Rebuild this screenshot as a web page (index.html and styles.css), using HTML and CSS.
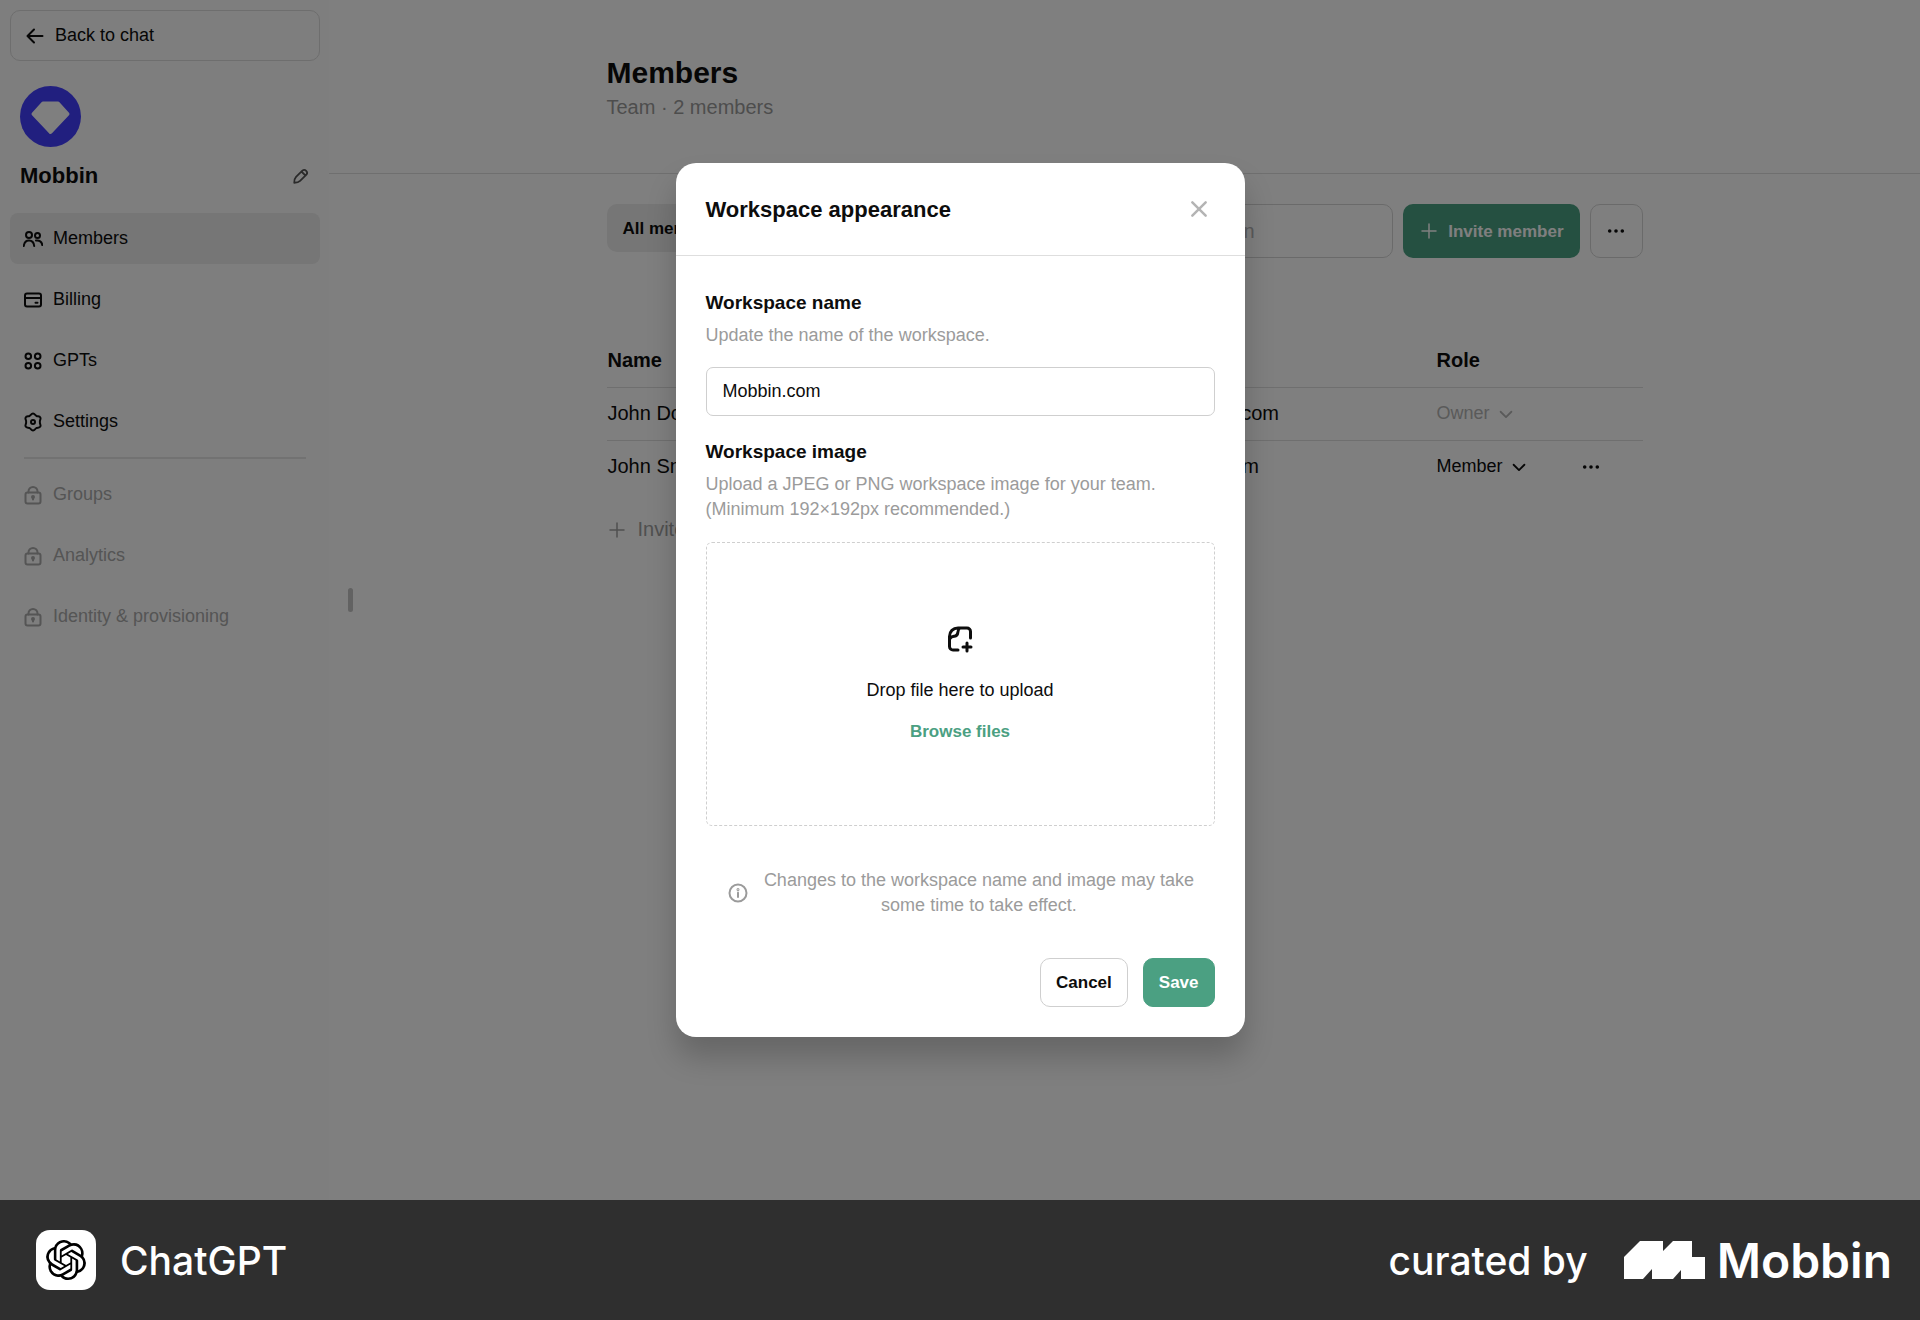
FILE: index.html
```html
<!DOCTYPE html>
<html lang="en">
<head>
    <meta charset="UTF-8">
    <meta name="viewport" content="width=device-width, initial-scale=1.0">
    <title>Members</title>
    <link rel="stylesheet" href="styles.css">
</head>
<body>
    <!-- Shared icons -->
    <svg class="sprite" aria-hidden="true">
        <symbol id="lock" viewBox="0 0 20 20">
            <rect x="2.500" y="7.500" width="15" height="11" rx="2"/>
            <path d="M5.500 7.500V6.500a4.500 4.500 0 0 1 9 0v1"/>
            <circle cx="10" cy="12" r="1" fill="currentColor"/>
            <path d="M10 12v2.500"/>
        </symbol>
        <symbol id="chevron" viewBox="0 0 20 20">
            <path d="M4 7.500 10 13.500l6-6"/>
        </symbol>
        <symbol id="dots" viewBox="0 0 20 20">
            <circle cx="3" cy="10" r="2"/>
            <circle cx="10" cy="10" r="2"/>
            <circle cx="17" cy="10" r="2"/>
        </symbol>
        <symbol id="plus" viewBox="0 0 20 20">
            <path d="M10 3v14M3 10h14"/>
        </symbol>
    </svg>

    <div class="app">
        <aside class="sidebar">
            <a class="back" href="#">
                <svg class="icon" viewBox="0 0 20 20"><path d="M17.500 10h-15M9 3.500 2.500 10 9 16.500"/></svg>
                Back to chat
            </a>
            <div class="workspace">
                <svg class="avatar" viewBox="0 0 61 61">
                    <circle cx="30.500" cy="30.500" r="30.500" fill="#433eff"/>
                    <path d="M23 17.500h15L47.500 28 30.500 46 13.500 28z" fill="#fff" stroke="#fff" stroke-width="4" stroke-linejoin="round"/>
                </svg>
                <div class="workspace-row">
                    <h2>Mobbin</h2>
                    <button class="edit" aria-label="Edit workspace">
                        <svg class="icon-sm" viewBox="0 0 20 20"><path d="M2.500 17.500c0-3.500.5-5 2-6.500l7-7a3.200 3.200 0 0 1 4.500 4.500l-7 7c-1.500 1.500-3 2-6.500 2zM10.500 5l4.500 4.500"/></svg>
                    </button>
                </div>
            </div>
            <nav class="menu">
                <a class="menu-item active" href="#">
                    <svg class="icon" viewBox="0 0 20 20"><circle cx="6" cy="6" r="3"/><circle cx="14.500" cy="6.500" r="2.500"/><path d="M.8 17c.4-3.500 2.500-5.500 5.200-5.500s4.800 2 5.200 5.500M13 11.600c3.300-.6 5.800 1.200 6.300 4.400"/></svg>
                    Members
                </a>
                <a class="menu-item" href="#">
                    <svg class="icon" viewBox="0 0 20 20"><rect x="2" y="3.500" width="16" height="13" rx="2"/><path d="M2 8h16M12.500 12.700h2"/></svg>
                    Billing
                </a>
                <a class="menu-item" href="#">
                    <svg class="icon" viewBox="0 0 20 20"><circle cx="5.300" cy="5.300" r="2.800"/><circle cx="14.700" cy="5.300" r="2.800"/><circle cx="5.300" cy="14.700" r="2.800"/><circle cx="14.700" cy="14.700" r="2.800"/></svg>
                    GPTs
                </a>
                <a class="menu-item" href="#">
                    <svg class="icon" viewBox="0 0 20 20"><path d="M13.450 4C15 4.600 16.600 3.900 17.400 5.600S16.400 8.400 16.900 10C16.400 11.600 18.200 12.700 17.400 14.400S15 15.400 13.450 16C12.200 16.700 11.700 18.400 10 18.400S7.800 16.700 6.550 16C5 15.400 3.400 16.100 2.600 14.400S3.600 11.600 3.100 10C3.600 8.400 1.800 7.300 2.600 5.600S5 4.600 6.550 4C7.800 3.300 8.300 1.600 10 1.600S12.200 3.300 13.450 4z"/><circle cx="10" cy="10" r="2"/></svg>
                    Settings
                </a>
                <hr>
                <a class="menu-item locked" href="#">
                    <svg class="icon"><use href="#lock"/></svg>
                    Groups
                </a>
                <a class="menu-item locked" href="#">
                    <svg class="icon"><use href="#lock"/></svg>
                    Analytics
                </a>
                <a class="menu-item locked" href="#">
                    <svg class="icon"><use href="#lock"/></svg>
                    Identity &amp; provisioning
                </a>
            </nav>
        </aside>

        <main class="main">
            <span class="drag-handle"></span>
            <header class="page-header">
                <div class="container">
                    <h1>Members</h1>
                    <p>Team · 2 members</p>
                </div>
            </header>
            <div class="container">
                <div class="toolbar">
                    <button class="tab">All members</button>
                    <input class="search" type="text" placeholder="Find a person" aria-label="Find a person">
                    <button class="invite">
                        <svg class="icon"><use href="#plus"/></svg>
                        Invite member
                    </button>
                    <button class="more" aria-label="More"><svg class="icon-sm dots"><use href="#dots"/></svg></button>
                </div>
                <table class="members">
                    <thead>
                        <tr><th class="col-name">Name</th><th class="col-email">Email</th><th class="col-role">Role</th><th></th></tr>
                    </thead>
                    <tbody>
                        <tr>
                            <td>John Doe</td>
                            <td>johndoe@mobbin.com</td>
                            <td>
                                <div class="role disabled">
                                    <select aria-label="Role of John Doe" disabled><option>Owner</option></select>
                                    <svg class="icon-sm"><use href="#chevron"/></svg>
                                </div>
                            </td>
                            <td></td>
                        </tr>
                        <tr>
                            <td>John Snow</td>
                            <td>jsnow@mobbin.com</td>
                            <td>
                                <div class="role">
                                    <select aria-label="Role of John Snow"><option>Member</option><option>Admin</option></select>
                                    <svg class="icon-sm"><use href="#chevron"/></svg>
                                </div>
                            </td>
                            <td><button class="row-more" aria-label="Member options"><svg class="icon-sm dots"><use href="#dots"/></svg></button></td>
                        </tr>
                    </tbody>
                </table>
                <button class="invite-row">
                    <svg class="icon"><use href="#plus"/></svg>
                    Invite member
                </button>
            </div>
        </main>

        <div class="overlay">
            <form class="modal" role="dialog" aria-labelledby="modal-title">
                <div class="modal-header">
                    <h2 id="modal-title">Workspace appearance</h2>
                    <button type="button" class="close" aria-label="Close">
                        <svg viewBox="0 0 24 24"><path d="M4 4l16 16M20 4 4 20"/></svg>
                    </button>
                </div>
                <div class="modal-body">
                    <label class="field-title" for="workspace-name">Workspace name</label>
                    <p class="hint">Update the name of the workspace.</p>
                    <input class="name-input" id="workspace-name" type="text" value="Mobbin.com">
                    <h3 class="field-title">Workspace image</h3>
                    <p class="hint">Upload a JPEG or PNG workspace image for your team. (Minimum 192×192px recommended.)</p>
                    <div class="dropzone">
                        <svg class="file-icon" viewBox="0 0 28 28"><path d="M12 25H7a3.500 3.500 0 0 1-3.500-3.500V11.500C3.500 6.500 7 3 12 3h9a3.500 3.500 0 0 1 3.500 3.500V13M4 13.500c1-2 2.500-2 4.500-2.300 2-.3 3-1.200 3.200-3.200.2-2 .3-3.500 2-5M21 18v8M17 22h8"/></svg>
                        <p>Drop file here to upload</p>
                        <button type="button" class="browse">Browse files</button>
                    </div>
                    <div class="notice">
                        <svg class="icon" viewBox="0 0 20 20"><circle cx="10" cy="10" r="8.500"/><path d="M10 9.500v4.500"/><circle cx="10" cy="6.500" r=".5"/></svg>
                        <p>Changes to the workspace name and image may take some time to take effect.</p>
                    </div>
                    <div class="actions">
                        <button type="button" class="btn">Cancel</button>
                        <button type="submit" class="btn primary">Save</button>
                    </div>
                </div>
            </form>
        </div>
    </div>

    <footer class="footer">
        <div class="brand">
            <span class="brand-logo">
                <svg viewBox="0 0 24 24"><path d="M22.2819 9.8211a5.9847 5.9847 0 0 0-.5157-4.9108 6.0462 6.0462 0 0 0-6.5098-2.9A6.0651 6.0651 0 0 0 4.9807 4.1818a5.9847 5.9847 0 0 0-3.9977 2.9 6.0462 6.0462 0 0 0 .7427 7.0966 5.98 5.98 0 0 0 .511 4.9107 6.051 6.051 0 0 0 6.5146 2.9001A5.9847 5.9847 0 0 0 13.2599 24a6.0557 6.0557 0 0 0 5.7718-4.2058 5.9894 5.9894 0 0 0 3.9977-2.9001 6.0557 6.0557 0 0 0-.7475-7.0729zm-9.022 12.6081a4.4755 4.4755 0 0 1-2.8764-1.0408l.1419-.0804 4.7783-2.7582a.7948.7948 0 0 0 .3927-.6813v-6.7369l2.02 1.1686a.071.071 0 0 1 .038.052v5.5826a4.504 4.504 0 0 1-4.4945 4.4944zm-9.6607-4.1254a4.4708 4.4708 0 0 1-.5346-3.0137l.142.0852 4.783 2.7582a.7712.7712 0 0 0 .7806 0l5.8428-3.3685v2.3324a.0804.0804 0 0 1-.0332.0615L9.74 19.9502a4.4992 4.4992 0 0 1-6.1408-1.6464zM2.3408 7.8956a4.485 4.485 0 0 1 2.3655-1.9728V11.6a.7664.7664 0 0 0 .3879.6765l5.8144 3.3543-2.0201 1.1685a.0757.0757 0 0 1-.071 0l-4.8303-2.7865A4.504 4.504 0 0 1 2.3408 7.872zm16.5963 3.8558L13.1038 8.364 15.1192 7.2a.0757.0757 0 0 1 .071 0l4.8303 2.7913a4.4944 4.4944 0 0 1-.6765 8.1042v-5.6772a.79.79 0 0 0-.407-.667zm2.0107-3.0231l-.142-.0852-4.7735-2.7818a.7759.7759 0 0 0-.7854 0L9.409 9.2297V6.8974a.0662.0662 0 0 1 .0284-.0615l4.8303-2.7866a4.4992 4.4992 0 0 1 6.6802 4.66zM8.3065 12.863l-2.02-1.1638a.0804.0804 0 0 1-.038-.0567V6.0742a4.4992 4.4992 0 0 1 7.3757-3.4537l-.142.0805L8.704 5.459a.7948.7948 0 0 0-.3927.6813zm1.0976-2.3654l2.602-1.4998 2.6069 1.4998v2.9994l-2.5974 1.4997-2.6067-1.4997Z"/></svg>
            </span>
            ChatGPT
        </div>
        <div class="curated">
            curated by
            <span class="mobbin">
                <svg viewBox="0 0 81 38"><path d="M0 16 16 0h23v10L49 0h19v16h13v22H57v-9l-8 9H28v-10L19 38H0z"/></svg>
                Mobbin
            </span>
        </div>
    </footer>
</body>
</html>
```
FILE: styles.css
```css
* {
    box-sizing: border-box;
    margin: 0;
    padding: 0;
}
body {
    display: flex;
    flex-direction: column;
    min-height: 100vh;
    font-family: "Liberation Sans", Arial, sans-serif;
    font-size: 18px;
    line-height: 25px;
    color: #0d0d0d;
}
button,
input,
select {
    font: inherit;
    color: inherit;
    background: none;
    border: none;
}
button {
    cursor: pointer;
}
a {
    color: inherit;
    text-decoration: none;
}
svg {
    flex-shrink: 0;
    fill: none;
    stroke: currentColor;
    stroke-width: 2;
    stroke-linecap: round;
    stroke-linejoin: round;
}
.sprite {
    position: absolute;
    width: 0;
    height: 0;
}
.icon {
    width: 20px;
    height: 20px;
}
.icon-sm {
    width: 18px;
    height: 18px;
}
.dots {
    fill: currentColor;
    stroke: none;
}

.app {
    position: relative;
    display: flex;
    flex: 1;
    background: #fff;
}

/* Sidebar */
.sidebar {
    width: 329px;
    padding: 10px;
    padding-right: 9px;
    background: #fcfcfc;
}
.back {
    display: flex;
    align-items: center;
    gap: 10px;
    height: 51px;
    padding: 0 14px;
    border: 1px solid #dcdcdc;
    border-radius: 10px;
}
.workspace {
    padding: 25px 10px 0;
}
.avatar {
    display: block;
    width: 61px;
    height: 61px;
    stroke: none;
}
.workspace-row {
    display: flex;
    align-items: center;
    justify-content: space-between;
    margin-top: 13px;
}
.workspace-row h2 {
    font-size: 22px;
    line-height: 32px;
}
.edit {
    display: flex;
    color: #555;
}
.menu {
    margin-top: 21px;
}
.menu-item {
    display: flex;
    align-items: center;
    gap: 10px;
    height: 51px;
    margin-bottom: 10px;
    padding: 0 13px;
    border-radius: 8px;
}
.menu-item.active {
    background: #ececec;
}
.menu-item.locked {
    color: #aaa;
}
.menu hr {
    height: 2px;
    margin: 0 14px 10px;
    border: none;
    background: #e4e4e4;
}

/* Members page */
.main {
    position: relative;
    flex: 1;
}
.drag-handle {
    position: absolute;
    top: 50%;
    left: 19px;
    width: 5px;
    height: 24px;
    margin-top: -12px;
    border-radius: 3px;
    background: #c4c4c4;
}
.container {
    width: 100%;
    max-width: 1036px;
    margin: 0 auto;
}
.page-header {
    padding: 54px 0 51px;
    border-bottom: 1px solid #dedede;
}
.page-header h1 {
    font-size: 30px;
    line-height: 38px;
}
.page-header p {
    font-size: 20px;
    line-height: 30px;
    color: #9b9b9b;
}
.toolbar {
    display: flex;
    align-items: flex-start;
    gap: 10px;
    margin-top: 30px;
}
.tab {
    height: 48px;
    margin-right: auto;
    padding: 0 16px;
    border-radius: 10px;
    background: #ececec;
    font-size: 17px;
    font-weight: bold;
}
.search {
    width: 300px;
    height: 54px;
    padding: 0 38px;
    border: 1px solid #d4d4d4;
    border-radius: 10px;
    font-size: 20px;
}
.search::placeholder {
    color: #b4b4b4;
}
.invite {
    display: flex;
    align-items: center;
    gap: 9px;
    height: 54px;
    padding: 0 16px;
    border-radius: 10px;
    background: #4ba082;
    color: #fff;
    font-size: 17px;
    font-weight: bold;
}
.invite .icon,
.invite-row .icon {
    stroke-width: 1.5;
}
.more {
    display: flex;
    align-items: center;
    justify-content: center;
    width: 53px;
    height: 54px;
    border: 1px solid #d4d4d4;
    border-radius: 10px;
}
.members {
    width: 100%;
    margin-top: 76px;
    border-collapse: collapse;
    table-layout: fixed;
    font-size: 20px;
    text-align: left;
}
.members th,
.members td {
    height: 53px;
    padding: 0 1px;
}
.members thead tr,
.members tbody tr:first-child {
    border-bottom: 1px solid #dedede;
}
.col-name {
    width: 471px;
}
.col-email {
    width: 358px;
}
.col-role {
    width: 145px;
}
.role {
    display: flex;
    align-items: center;
    gap: 7px;
    font-size: 18px;
}
.role select {
    appearance: none;
    opacity: 1;
    field-sizing: content;
}
.role.disabled {
    color: #b4b4b4;
}
.row-more {
    display: flex;
}
.invite-row {
    display: flex;
    align-items: center;
    gap: 11px;
    height: 53px;
    margin-top: 10px;
    font-size: 20px;
    color: #a0a0a0;
}

/* Workspace dialog */
.overlay {
    position: absolute;
    inset: 0;
    display: flex;
    align-items: center;
    justify-content: center;
    background: rgba(0, 0, 0, 0.5);
}
.modal {
    width: 569px;
    border-radius: 20px;
    background: #fff;
    box-shadow: 0 20px 30px rgba(0, 0, 0, 0.2);
}
.modal-header {
    display: flex;
    align-items: center;
    justify-content: space-between;
    height: 93px;
    padding: 0 36px 0 30px;
    border-bottom: 1px solid #dedede;
}
.modal-header h2 {
    font-size: 22px;
}
.close {
    display: flex;
    color: #b4b4b4;
}
.close svg {
    width: 20px;
    height: 20px;
    stroke-width: 3;
}
.modal-body {
    padding: 32px 30px 30px;
}
.field-title {
    display: block;
    font-size: 19px;
    font-weight: bold;
    line-height: 30px;
}
.hint {
    margin-top: 5px;
    color: #9b9b9b;
}
.name-input {
    width: 100%;
    height: 49px;
    margin: 19px 0 21px;
    padding: 0 16px;
    border: 1px solid #cfcfcf;
    border-radius: 7px;
}
.dropzone {
    display: flex;
    flex-direction: column;
    align-items: center;
    justify-content: center;
    height: 284px;
    margin-top: 20px;
    border: 1px dashed #cfcfcf;
    border-radius: 6px;
}
.file-icon {
    width: 28px;
    height: 28px;
    margin-bottom: 25px;
    stroke-width: 3;
}
.browse {
    margin-top: 16px;
    color: #4ba082;
    font-size: 17px;
    font-weight: bold;
}
.notice {
    display: flex;
    align-items: center;
    gap: 8px;
    margin-top: 42px;
    padding: 0 12px 0 22px;
    color: #9b9b9b;
    text-align: center;
}
.notice p {
    flex: 1;
}
.actions {
    display: flex;
    justify-content: flex-end;
    gap: 15px;
    margin-top: 40px;
}
.btn {
    height: 49px;
    padding: 0 15px;
    border: 1px solid #cfcfcf;
    border-radius: 10px;
    font-size: 17px;
    font-weight: bold;
}
.btn.primary {
    border-color: #4ba082;
    background: #4ba082;
    color: #fff;
}

/* Footer */
.footer {
    display: flex;
    align-items: center;
    justify-content: space-between;
    height: 120px;
    padding: 0 28px 0 36px;
    background: #2f2f2f;
    color: #fff;
    font-family: Inter, sans-serif;
    font-size: 39px;
    font-weight: 500;
}
.footer svg {
    fill: currentColor;
    stroke: none;
}
.brand,
.curated,
.mobbin {
    display: flex;
    align-items: center;
}
.brand {
    gap: 24px;
}
.brand-logo {
    display: flex;
    align-items: center;
    justify-content: center;
    width: 60px;
    height: 60px;
    border-radius: 14px;
    background: #fff;
    color: #000;
}
.brand-logo svg {
    width: 40px;
    height: 40px;
}
.curated {
    gap: 36px;
}
.mobbin {
    gap: 12px;
    font-size: 48px;
    font-weight: 600;
}
.mobbin svg {
    width: 81px;
    height: 38px;
}
```
